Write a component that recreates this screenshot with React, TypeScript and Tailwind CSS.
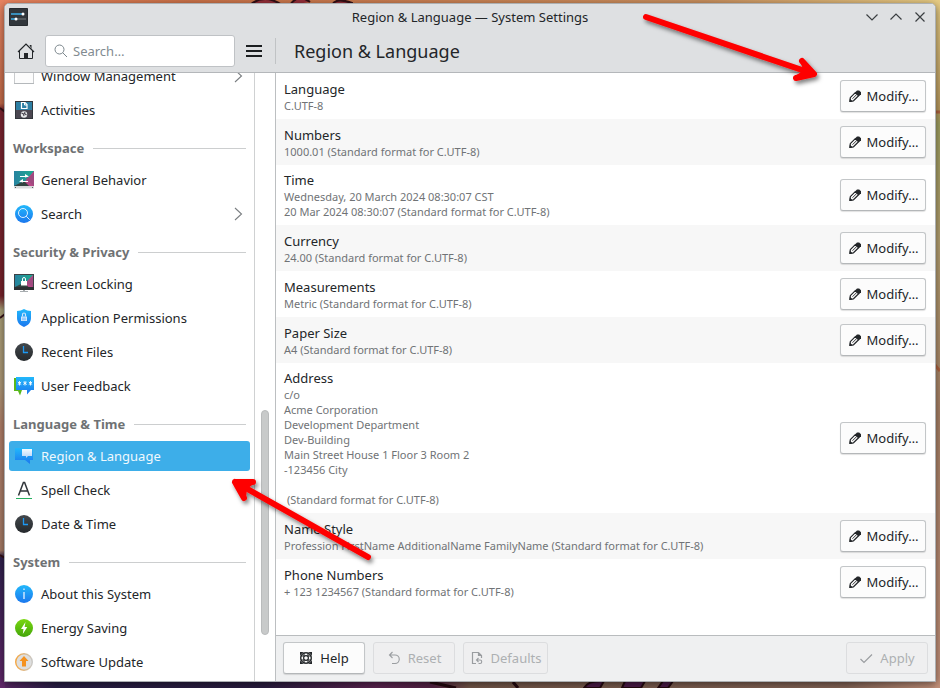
import type { ReactNode } from "react";

type IconProps = { className?: string };

const Svg = ({ size = 20, children }: { size?: number; children: ReactNode }) => (
  <svg width={size} height={size} viewBox={`0 0 ${size} ${size}`} fill="none" className="shrink-0" aria-hidden="true">
    {children}
  </svg>
);

const Gradients = () => (
  <svg width="0" height="0" className="absolute" aria-hidden="true">
    <defs>
      <linearGradient id="blue" x1="0" y1="0" x2="0" y2="1">
        <stop offset="0" stopColor="#22b8fb" />
        <stop offset="1" stopColor="#1b77ee" />
      </linearGradient>
      <linearGradient id="green" x1="0" y1="0" x2="0" y2="1">
        <stop offset="0" stopColor="#7ad812" />
        <stop offset="1" stopColor="#43a50a" />
      </linearGradient>
      <linearGradient id="dark" x1="0" y1="0" x2="0" y2="1">
        <stop offset="0" stopColor="#43484c" />
        <stop offset="1" stopColor="#25292c" />
      </linearGradient>
      <linearGradient id="teal" x1="0" y1="0" x2="1" y2="0">
        <stop offset="0" stopColor="#2783a0" />
        <stop offset="1" stopColor="#1dab8e" />
      </linearGradient>
      <linearGradient id="orange" x1="0" y1="0" x2="1" y2="0">
        <stop offset="0" stopColor="#f5a640" />
        <stop offset="1" stopColor="#c9c9c7" />
      </linearGradient>
      <linearGradient id="bubble" x1="0" y1="0" x2="0" y2="1">
        <stop offset="0" stopColor="#f4faff" />
        <stop offset="1" stopColor="#b4d3f8" />
      </linearGradient>
    </defs>
  </svg>
);

const WindowIcon = () => (
  <Svg>
    <path d="M0 2h20v14H0z" fill="#31363b" />
    <path d="M.5 0v17.5h19V0" fill="#fcfcfc" stroke="#c9cbcd" />
    <path d="M0 17.5h20" stroke="#b4b8bb" />
  </Svg>
);

const ActivitiesIcon = () => (
  <Svg>
    <path d="M1 1h18v18H1z" fill="#31363b" />
    <path d="M2 2h16v8H2z" fill="#2d7fa4" />
    <path d="M2 10h16v8H2z" fill="#4b4751" />
    <path d="M7.5 2.500h3.500l2 2v4H7.500z" stroke="#fff" strokeWidth="1.200" />
    <path d="M10.500 2.500v2.500H13" stroke="#fff" />
    <circle cx="10" cy="14.500" r="3.200" fill="#e9ebec" />
    <path d="M7.500 13l2 1 .5 2M11 12l-.5 1.500 2 1.500" stroke="#4b4751" strokeWidth="1.100" />
  </Svg>
);

const PlasmaPanes = ({ height }: { height: number }) => (
  <>
    <path d={`M0 1h20v${height}H0z`} fill="url(#teal)" />
    <path d={`M20 1L7 ${height + 1}h13z`} fill="#b54886" />
    <path d={`M20 3l-8 6 8 ${height - 8}z`} fill="#a04a80" />
    <path d={`M0 ${height + 1}l10-5 5 5z`} fill="#31423f" />
  </>
);

const BehaviorIcon = () => (
  <Svg>
    <PlasmaPanes height={15} />
    <path d="M0 16h20v2.500H0z" fill="#d9dbdc" />
    <path d="M1 17h1v1H1zM18 17h1v1h-1z" fill="#5b6064" />
    <path d="M6 6.500h8M6 11.500h8" stroke="#fff" strokeWidth="1.200" />
    <path d="M11 4l4 2.500-4 1zM9 9l-4 2.500 4 1z" fill="#fff" />
  </Svg>
);

const SearchCircleIcon = () => (
  <Svg>
    <circle cx="10" cy="10" r="9" fill="url(#blue)" />
    <circle cx="9" cy="9" r="4.500" stroke="#fff" strokeOpacity=".85" />
    <path d="M12.200 12.200l3.500 3.500" stroke="#fff" strokeOpacity=".85" />
  </Svg>
);

const ScreenLockIcon = () => (
  <Svg>
    <path d="M0 0h20v15H0z" fill="#3c4246" />
    <svg x="1" y="1" width="18" height="12" viewBox="0 1 20 13" preserveAspectRatio="none">
      <PlasmaPanes height={13} />
    </svg>
    <path d="M0 13h20v3H0z" fill="#2b2f32" />
    <path d="M9 16h2v1.500H9z" fill="#a8adb0" />
    <path d="M6 17.500h8" stroke="#a8adb0" />
    <path d="M7 7h6v4.500H7z" fill="#fff" />
    <path d="M8.500 8V5a1.500 1.500 0 013 0v3" stroke="#fff" />
  </Svg>
);

const ShieldIcon = () => (
  <Svg>
    <path d="M10 1c2 1.300 4.500 2 7 2v7c0 4.500-3 7.500-7 9-4-1.500-7-4.500-7-9V3c2.500 0 5-.7 7-2z" fill="url(#blue)" />
    <path d="M7 8.500h6v4.500H7z" fill="#cfe6fd" />
    <path d="M8.500 8.500V6.500a1.500 1.500 0 013 0v2" stroke="#cfe6fd" strokeWidth="1.200" />
    <path d="M8 10.200h4M8 11.700h4" stroke="#58a6f3" strokeWidth=".6" />
  </Svg>
);

const ClockIcon = () => (
  <Svg>
    <circle cx="10" cy="10" r="9" fill="url(#dark)" />
    <path d="M9.500 4v6.500H14" stroke="#1d99f3" strokeWidth="1.300" />
  </Svg>
);

const FeedbackIcon = () => (
  <Svg>
    <path d="M0 2h8v12l-2 5.500L4 15H0z" fill="#59b81c" />
    <path d="M2 1h18v13h-3l-4 4.500V14H2z" fill="url(#blue)" />
    <path
      d="M5.500 5v4.500M3.800 6l3.400 2.500M7.200 6L3.800 8.500M11 5v4.500M9.300 6l3.400 2.500M12.700 6L9.300 8.500M16.500 5v4.500M14.800 6l3.400 2.500M18.200 6l-3.400 2.500"
      stroke="#fff"
      strokeWidth=".9"
    />
  </Svg>
);

const RegionIcon = () => (
  <Svg>
    <path d="M1 2h18v12h-3v4l-5-4H1z" fill="url(#blue)" />
    <path d="M8 3h10v7h-4l-2 2v-2H8z" fill="url(#bubble)" />
  </Svg>
);

const SpellIcon = () => (
  <Svg>
    <path d="M4.500 15.500L9.400 2.500h1.200l4.900 13M6.200 11h7.600" stroke="#31363b" strokeWidth="1.500" />
    <path d="M2 18.500h16" stroke="#27ae60" />
  </Svg>
);

const InfoIcon = () => (
  <Svg>
    <circle cx="10" cy="10" r="9" fill="url(#blue)" />
    <path d="M10 8v7M10 4.500v1.500" stroke="#d8ecff" strokeWidth="1.400" />
  </Svg>
);

const EnergyIcon = () => (
  <Svg>
    <circle cx="10" cy="10" r="9" fill="url(#green)" />
    <path d="M11.500 4L7 11h2.500L8.800 16l4.500-7H10.600z" fill="#fff" />
  </Svg>
);

const UpdateIcon = () => (
  <Svg>
    <circle cx="10" cy="10" r="8.300" fill="#dedfdf" stroke="url(#orange)" strokeWidth="1.400" />
    <path d="M10 4l4.500 5H12v5.500H8V9H5.500z" fill="#f5921f" />
  </Svg>
);

const Chevron = () => (
  <Svg size={16}>
    <path d="M5 2l6.500 6L5 14" stroke="#7b7f82" strokeWidth="1.100" />
  </Svg>
);

const PencilIcon = () => (
  <Svg size={14}>
    <path d="M2.300 8.700L7.300 3.700 10.600 6.800 5.500 11.800 2 12.300z" stroke="#232629" strokeWidth="1.200" strokeLinejoin="round" />
    <path d="M7 3.500L9 1.500h2.200l1.800 1.800v1.900L11 7.200z" fill="#232629" />
    <path d="M4.500 9.700L8.600 5.600" stroke="#232629" strokeWidth=".9" />
    <path d="M1.300 13l.5-3.400 2.900 2.800z" fill="#232629" />
  </Svg>
);

const HelpIcon = () => (
  <Svg size={14}>
    <circle cx="7" cy="7" r="5.300" stroke="#232629" strokeWidth="1.400" />
    <circle cx="7" cy="7" r="2.400" stroke="#232629" strokeWidth="1.200" />
    <path d="M1 1h3.500L3 2.500 1 4.500zM13 1H9.500L11 2.500l2 2zM1 13h3.500L3 11.500l-2-2zM13 13H9.500l1.500-1.500 2-2z" fill="#232629" />
    <path d="M5 1.500v3.500H1.500M9 1.500v3.500h3.500M5 12.500V9H1.500M9 12.500V9h3.500" stroke="#232629" strokeWidth="1.100" />
  </Svg>
);

const ResetIcon = () => (
  <Svg size={14}>
    <path d="M5.500 1L2.500 4l3 3M2.500 4H8a4.200 4.200 0 010 8.500H5" stroke="#9a9da0" strokeWidth="1.100" />
  </Svg>
);

const DefaultsIcon = () => (
  <Svg size={14}>
    <path d="M6 12.500H2.500v-11h6l3 3V7M8.500 1.500v3h3" stroke="#9a9da0" strokeWidth="1.200" />
    <path d="M8.500 7L6.500 9l2 2M6.500 9H10a1.700 1.700 0 010 3.500H8.500" stroke="#9a9da0" strokeWidth="1.100" />
  </Svg>
);

const CheckIcon = () => (
  <Svg size={14}>
    <path d="M1.500 8L5 11.500 13 3.500" stroke="#9a9da0" strokeWidth="1.200" />
  </Svg>
);

type Item = { label: string; Icon: (props: IconProps) => ReactNode; more?: boolean; active?: boolean };

const groups: { title?: string; items: Item[] }[] = [
  {
    items: [
      { label: "Window Management", Icon: WindowIcon, more: true },
      { label: "Activities", Icon: ActivitiesIcon },
    ],
  },
  {
    title: "Workspace",
    items: [
      { label: "General Behavior", Icon: BehaviorIcon },
      { label: "Search", Icon: SearchCircleIcon, more: true },
    ],
  },
  {
    title: "Security & Privacy",
    items: [
      { label: "Screen Locking", Icon: ScreenLockIcon },
      { label: "Application Permissions", Icon: ShieldIcon },
      { label: "Recent Files", Icon: ClockIcon },
      { label: "User Feedback", Icon: FeedbackIcon },
    ],
  },
  {
    title: "Language & Time",
    items: [
      { label: "Region & Language", Icon: RegionIcon, active: true },
      { label: "Spell Check", Icon: SpellIcon },
      { label: "Date & Time", Icon: ClockIcon },
    ],
  },
  {
    title: "System",
    items: [
      { label: "About this System", Icon: InfoIcon },
      { label: "Energy Saving", Icon: EnergyIcon },
      { label: "Software Update", Icon: UpdateIcon },
    ],
  },
];

const settings: { name: string; lines: string[] }[] = [
  { name: "Language", lines: ["C.UTF-8"] },
  { name: "Numbers", lines: ["1000.01 (Standard format for C.UTF-8)"] },
  {
    name: "Time",
    lines: ["Wednesday, 20 March 2024 08:30:07 CST", "20 Mar 2024 08:30:07 (Standard format for C.UTF-8)"],
  },
  { name: "Currency", lines: ["24.00 (Standard format for C.UTF-8)"] },
  { name: "Measurements", lines: ["Metric (Standard format for C.UTF-8)"] },
  { name: "Paper Size", lines: ["A4 (Standard format for C.UTF-8)"] },
  {
    name: "Address",
    lines: [
      "c/o",
      "Acme Corporation",
      "Development Department",
      "Dev-Building",
      "Main Street House 1 Floor 3 Room 2",
      "-123456 City",
      "",
      " (Standard format for C.UTF-8)",
    ],
  },
  { name: "Name Style", lines: ["Profession FirstName AdditionalName FamilyName (Standard format for C.UTF-8)"] },
  { name: "Phone Numbers", lines: ["+ 123 1234567 (Standard format for C.UTF-8)"] },
];

const Wallpaper = () => (
  <svg className="absolute inset-0 h-full w-full" viewBox="0 0 940 688" preserveAspectRatio="none" aria-hidden="true">
    <defs>
      <linearGradient id="skyTop" x1="0" x2="1" y1="0" y2="0">
        <stop offset="0" stopColor="#ee8661" />
        <stop offset=".2" stopColor="#cd7349" />
        <stop offset=".75" stopColor="#cb915f" />
        <stop offset="1" stopColor="#e8cd85" />
      </linearGradient>
      <linearGradient id="edgeLeft" x1="0" x2="0" y1="0" y2="1">
        <stop offset="0" stopColor="#e98562" />
        <stop offset=".15" stopColor="#c56c4a" />
        <stop offset=".16" stopColor="#7c2530" />
        <stop offset=".43" stopColor="#78222b" />
        <stop offset=".45" stopColor="#aba078" />
        <stop offset=".56" stopColor="#b09a78" />
        <stop offset=".62" stopColor="#b27f69" />
        <stop offset=".8" stopColor="#a87d67" />
        <stop offset=".81" stopColor="#30214d" />
        <stop offset="1" stopColor="#62286b" />
      </linearGradient>
      <linearGradient id="edgeRight" x1="0" x2="0" y1="0" y2="1">
        <stop offset="0" stopColor="#e8cd85" />
        <stop offset=".16" stopColor="#b99a5f" />
        <stop offset=".18" stopColor="#a0a060" />
        <stop offset=".35" stopColor="#b5a070" />
        <stop offset=".6" stopColor="#a98267" />
        <stop offset="1" stopColor="#c4917a" />
      </linearGradient>
      <linearGradient id="ground" x1="0" x2="1" y1="0" y2="0">
        <stop offset="0" stopColor="#5c2767" />
        <stop offset=".06" stopColor="#291f46" />
        <stop offset=".28" stopColor="#2a1d40" />
        <stop offset=".4" stopColor="#5b2350" />
        <stop offset=".46" stopColor="#542244" />
        <stop offset=".5" stopColor="#735648" />
        <stop offset=".9" stopColor="#846456" />
        <stop offset="1" stopColor="#c4917a" />
      </linearGradient>
    </defs>
    <path d="M0 0h940v344H0z" fill="url(#skyTop)" />
    <path d="M0 344h940v344H0z" fill="url(#ground)" />
    <path d="M0 0h5v688H0z" fill="url(#edgeLeft)" />
    <path d="M935 0h5v688h-5z" fill="url(#edgeRight)" />
    <path d="M250 5q14-12 32 0M290 5q8-12 20-3M332 5q4-8 20-2v4" fill="#96303a" stroke="#341016" strokeWidth="2" />
    <path d="M430 682l26 6M513 682l5 6" stroke="#23080e" strokeWidth="3" />
    <path d="M584 688q4-8 20-7l-4 7zM622 688l3-7h20l-4 7zM658 688l5-7h10l-5 7z" fill="#4c1b49" stroke="#23080e" strokeWidth="2" />
    <path d="M0 108l5 4M0 318l5-4M0 555l5 3" stroke="#351016" strokeWidth="2" />
    <path d="M935 112h5M935 365l5 6" stroke="#b06440" strokeWidth="3" />
  </svg>
);

const Arrows = () => (
  <svg className="pointer-events-none absolute inset-0 h-full w-full" viewBox="0 0 940 688" preserveAspectRatio="none" aria-hidden="true">
    <defs>
      <filter id="arrowShadow" x="-10%" y="-10%" width="120%" height="120%">
        <feDropShadow dx="2" dy="3" stdDeviation="2" floodColor="#000" floodOpacity=".5" />
      </filter>
    </defs>
    <g stroke="#fe0000" strokeWidth="6" strokeLinecap="round" strokeLinejoin="round" fill="none" filter="url(#arrowShadow)">
      <path d="M646 17L814 74M802 61L814 74 796 78" />
      <path d="M802 61L814 74 796 78 806 71z" fill="#fe0000" strokeWidth="4" />
      <path d="M368 557L235 482M253 482L235 482 244 498" />
      <path d="M253 482L235 482 244 498 245 488z" fill="#fe0000" strokeWidth="4" />
    </g>
  </svg>
);

const shadowed =
  "flex h-8 items-center justify-center rounded-[3px] border border-[#c3c6c8] border-b-[#b4b7b9] bg-[#fcfcfc] shadow-[0_1px_1px_rgba(0,0,0,0.12)]";
const disabled =
  "flex h-8 items-center justify-center gap-[7px] rounded-[3px] border border-[#dcdddf] bg-[#efeff0] text-[#adb0b2]";

export default function App() {
  return (
    <div className="relative flex h-screen flex-col overflow-hidden px-1 pt-[3px] pb-[6px] font-['Noto_Sans','Open_Sans',sans-serif] text-[13px] leading-[18px] text-[#232629]">
      <Wallpaper />
      <Gradients />
      <div className="relative flex min-h-0 flex-1 flex-col overflow-hidden rounded-t-[5px] border border-[#acb0b3] bg-white shadow-[0_2px_8px_rgba(0,0,0,0.5)]">
        <header className="shrink-0 border-b border-[#b4b7ba] bg-[#dee0e2]">
          <div className="grid h-[26px] grid-cols-[1fr_auto_1fr] items-center px-1">
            <Svg size={20}>
              <path d="M.500 1.500h18v17H.5z" fill="#31363b" stroke="#272b2f" />
              <path d="M2 7h12" stroke="#3daee9" strokeWidth="1.300" />
              <path d="M2 12h4" stroke="#3daee9" strokeWidth="1.300" />
              <path d="M7 12h10" stroke="#777c80" />
              <circle cx="14" cy="7" r="1.500" fill="#fff" />
              <circle cx="7" cy="12" r="1.500" fill="#fff" />
            </Svg>
            <div>Region &amp; Language — System Settings</div>
            <div className="flex justify-end gap-2 pr-[3px]">
              <button type="button" aria-label="Minimize">
                <Svg size={16}><path d="M2.500 5.500L8 11l5.500-5.500" stroke="#3b3f42" strokeWidth="1.200" /></Svg>
              </button>
              <button type="button" aria-label="Maximize">
                <Svg size={16}><path d="M2.500 10.500L8 5l5.500 5.500" stroke="#3b3f42" strokeWidth="1.200" /></Svg>
              </button>
              <button type="button" aria-label="Close">
                <Svg size={16}><path d="M3.500 3.500l9 9M12.500 3.500l-9 9" stroke="#3b3f42" strokeWidth="1.200" /></Svg>
              </button>
            </div>
          </div>
          <div className="flex h-[42px] items-center">
            <button type="button" aria-label="Home" className="ml-3">
              <Svg size={18}>
                <path d="M1 10L9 2l8 8" stroke="#232629" strokeWidth="1.200" />
                <path d="M2.500 9v7.500h13V9" stroke="#232629" />
                <path d="M7 11h4v6H7z" fill="#232629" />
                <path d="M12.500 3h2v4z" fill="#232629" />
              </Svg>
            </button>
            <label className="ml-[10px] flex h-8 w-[190px] items-center gap-[5px] rounded-[3px] border border-[#bfc2c5] bg-white pl-2 text-[#7b868c]">
              <Svg size={14}>
                <circle cx="5.500" cy="5.500" r="4.500" stroke="currentColor" />
                <path d="M8.700 8.700L13 13" stroke="currentColor" />
              </Svg>
              <input
                type="text"
                aria-label="Search"
                placeholder="Search…"
                className="min-w-0 flex-1 bg-transparent text-[#232629] outline-none placeholder:text-[#828b91]"
              />
            </label>
            <button type="button" aria-label="Menu" className="ml-[10px]">
              <Svg size={18}>
                <path d="M1 4h16M1 9h16M1 14h16" stroke="#1b1e20" strokeWidth="2" />
              </Svg>
            </button>
            <div className="ml-3 h-[26px] w-px bg-[#c0c3c5]" />
            <h1 className="ml-[18px] text-[18px] leading-6">Region &amp; Language</h1>
          </div>
        </header>

        <div className="flex min-h-0 flex-1">
          <nav className="flex w-[250px] shrink-0 flex-col justify-end overflow-hidden border-r border-[#cfd1d2] px-1 pb-0.5">
            {groups.map((group, index) => (
              <section key={index} className="shrink-0">
                {group.title && (
                  <h2 className="flex h-9 items-center gap-[9px] px-1 pt-[6px] font-bold text-[#6f7274]">
                    {group.title}
                    <span className="h-px flex-1 bg-[#cccecf]" />
                  </h2>
                )}
                <ul>
                  {group.items.map(({ label, Icon, more, active }) => (
                    <li key={label} className="py-0.5">
                      <button
                        type="button"
                        className={`flex h-[30px] w-full items-center gap-[7px] rounded-[3px] pr-1 pl-[5px] text-left ${
                          active ? "bg-[#3daee9] text-[#eff8fd]" : ""
                        }`}
                      >
                        <Icon />
                        <span className="flex-1">{label}</span>
                        {more && <Chevron />}
                      </button>
                    </li>
                  ))}
                </ul>
              </section>
            ))}
          </nav>
          <div className="flex w-[21px] shrink-0 flex-col items-center justify-end border-r border-[#bcbfc1] pb-[46px]">
            <div className="h-[40%] w-2 rounded-full border border-[#b9bbbc] bg-[#c8caca]" />
          </div>

          <main className="flex min-w-0 flex-1 flex-col">
            <ul className="min-h-0 flex-1 overflow-hidden">
              {settings.map(({ name, lines }) => (
                <li key={name} className="flex min-h-[46px] items-center justify-between gap-4 pr-[9px] pl-2 even:bg-[#f7f7f7]">
                  <div className="py-[6px]">
                    <h3>{name}</h3>
                    <p className="min-h-[15px] text-[11px] leading-[15px] whitespace-pre-wrap text-[#707376]">{lines.join("\n")}</p>
                  </div>
                  <button type="button" aria-label={`Modify ${name}`} className={`${shadowed} w-[86px] shrink-0 gap-[5px]`}>
                    <PencilIcon />
                    Modify…
                  </button>
                </li>
              ))}
            </ul>
            <footer className="flex shrink-0 gap-2 border-t border-[#b9bcbe] bg-[#eff0f1] px-[7px] pt-[6px] pb-[7px]">
              <button type="button" className={`${shadowed} w-[82px] gap-[7px]`}>
                <HelpIcon />
                Help
              </button>
              <button type="button" disabled className={`${disabled} w-[82px]`}>
                <ResetIcon />
                Reset
              </button>
              <button type="button" disabled className={`${disabled} w-[85px]`}>
                <DefaultsIcon />
                Defaults
              </button>
              <button type="button" disabled className={`${disabled} ml-auto w-[82px]`}>
                <CheckIcon />
                Apply
              </button>
            </footer>
          </main>
        </div>
      </div>
      <Arrows />
    </div>
  );
}
